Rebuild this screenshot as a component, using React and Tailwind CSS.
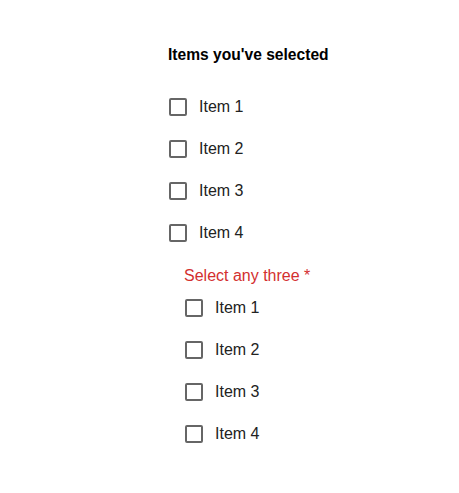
import React from 'react'

const items = ['Item 1', 'Item 2', 'Item 3', 'Item 4']

const Row = ({ label }) => (
  <label className="flex items-center h-[42px] gap-3">
    <span className="w-[18px] h-[18px] border-2 border-[#666666] rounded-[2px] bg-white" />
    <span className="text-[16px] text-[#222222]">{label}</span>
  </label>
)

export default function App() {
  return (
    <div className="w-[459px] h-[493px] bg-white pl-[168px] pt-[45px]" style={{ fontFamily: '"Liberation Sans", Arial, sans-serif' }}>
      <h3 className="text-[15.6px] font-bold text-black leading-[20px]">
        Items you've selected
      </h3>
      <div className="mt-[21px] pl-px">
        {items.map((it) => (
          <Row key={it} label={it} />
        ))}
      </div>
      <div className="pl-[16px] mt-[12px]">
        <div className="text-[16px] text-[#d32f2f] leading-[20px]">Select any three *</div>
        <div className="mt-[1px] pl-px">
          {items.map((it) => (
            <Row key={it} label={it} />
          ))}
        </div>
      </div>
    </div>
  )
}
